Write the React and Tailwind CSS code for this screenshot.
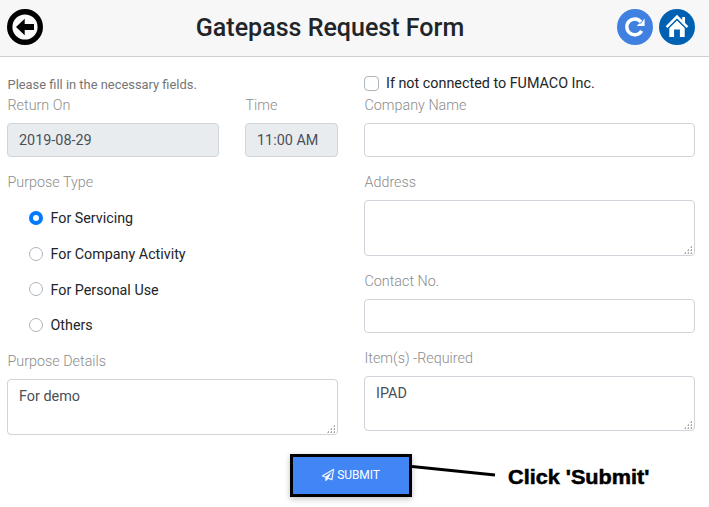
import React from 'react';

function Label({ children, className = '' }) {
  return (
    <label className={`block h-[18px] whitespace-nowrap pt-px pl-[0.5px] text-[14.35px] leading-[18px] font-light text-[#8c8c8c] ${className}`}>
      {children}
    </label>
  );
}

function Field({ value = '', disabled = false, className = 'w-full' }) {
  return (
    <input
      readOnly
      value={value}
      className={`block h-[34px] rounded-[4px] border border-[#ced4da] px-[11px] text-[14.4px] text-[#495057] outline-none ${disabled ? 'bg-[#e9ecef]' : 'bg-white'} ${className}`}
    />
  );
}

const gripDots = [[7, 0], [4, 3], [7, 3], [1, 6], [4, 6], [7, 6]];

function Area({ value = '', className = 'h-[56px]' }) {
  return (
    <div className={`relative w-full ${className}`}>
      <textarea
        readOnly
        value={value}
        className="block h-full w-full resize-none overflow-hidden rounded-[4px] border border-[#ced4da] bg-white px-[11px] py-[6px] text-[14.4px] leading-[22px] text-[#495057] outline-none"
      />
      <svg className="absolute right-[2px] bottom-[2px] h-[8px] w-[9px]" viewBox="0 0 9 8" shapeRendering="crispEdges">
        {gripDots.map(([x, y]) => (
          <g key={`${x}-${y}`}>
            <rect x={x} y={y} width="1" height="2" fill="#adadad" />
            <rect x={x - 1} y={y + 1} width="1" height="1" fill="#cccccc" />
          </g>
        ))}
      </svg>
    </div>
  );
}

function Radio({ label, checked = false }) {
  return (
    <div className="flex h-[35.7px] items-center">
      <span
        className={`h-[14px] w-[14px] rounded-full ${checked ? 'border-[4px] border-[#007bff] bg-white' : 'border border-[#adb5bd] bg-white'}`}
      />
      <span className="ml-[7.5px] whitespace-nowrap pt-[1px] text-[14.3px] leading-[20px] text-[#212529]">{label}</span>
    </div>
  );
}

function Header() {
  return (
    <header className="flex h-[57px] items-start justify-between border-b border-[#d0d0d0] bg-[#f7f7f7] pt-[9px] pr-[14px] pl-[7px]">
      <svg className="h-[36px] w-[36px]" viewBox="0 0 36 36">
        <circle cx="18" cy="18" r="15.3" fill="#fafafa" stroke="#000" strokeWidth="5.4" />
        <path d="M9 18 L17.7 9.7 V15 H27 V21 H17.7 V26.3 Z" fill="#000" />
      </svg>
      <h1 className="text-[25.05px] leading-[37px] font-medium whitespace-nowrap text-[#212529]">Gatepass Request Form</h1>
      <div className="flex gap-[6px]">
        <svg className="h-[36px] w-[36px]" viewBox="0 0 36 36">
          <circle cx="18" cy="18" r="18" fill="#4080e0" />
          <path d="M24 13 A7.900 7.900 0 1 0 24.600 21.800" fill="none" stroke="#fff" strokeWidth="3.4" />
          <path d="M27.600 9.500 V17 H19.600 L22.200 14.600 H24 Z" fill="#fff" />
        </svg>
        <svg className="h-[36px] w-[36px]" viewBox="0 0 36 36">
          <circle cx="18" cy="18" r="18" fill="#0061b3" />
          <path d="M7.6 18.2 L18 7.6 L28.400 18.2" fill="none" stroke="#fff" strokeWidth="2.500" />
          <path d="M23.200 8 H26 V14.500 L23.200 11.800 Z" fill="#fff" />
          <path d="M10.300 18.900 L18 11.500 L25.700 18.900 V28 H20.900 V20.500 H15.100 V28 H10.300 Z" fill="#fff" />
          <path d="M9 19.300 L18 10.200 L27 19.300" fill="none" stroke="#0061b3" strokeWidth="0.8" />
        </svg>
      </div>
    </header>
  );
}

export default function App() {
  return (
    <div className="relative h-[507px] w-[709px] overflow-hidden bg-white font-[Roboto,sans-serif]">
      <Header />
      <main className="flex gap-[26px] pt-[18px] pl-[7px]">
        <section className="w-[331px]">
          <p className="h-[21px] pl-[0.5px] text-[12.9px] leading-[20px] text-[#757575]">Please fill in the necessary fields.</p>
          <div className="flex gap-[26px]">
            <div className="w-[212px]">
              <Label>Return On</Label>
              <Field value="2019-08-29" disabled className="mt-[9px] w-full" />
            </div>
            <div className="w-[93px]">
              <Label>Time</Label>
              <Field value="11:00 AM" disabled className="mt-[9px] w-full" />
            </div>
          </div>
          <Label className="mt-[16px]">Purpose Type</Label>
          <div className="mt-[9px] mb-[9px] h-[143px] pl-[22px]">
            <Radio label="For Servicing" checked />
            <Radio label="For Company Activity" />
            <Radio label="For Personal Use" />
            <Radio label="Others" />
          </div>
          <Label>Purpose Details</Label>
          <Area value="For demo" className="mt-[9px] h-[56px]" />
        </section>
        <section className="w-[331px]">
          <div className="flex h-[21px] items-start">
            <span className="mt-px h-[15px] w-[15px] rounded-[4px] border border-[#adb5bd] bg-white" />
            <span className="ml-[7px] text-[14.35px] leading-[18px] whitespace-nowrap text-[#212529]">If not connected to FUMACO Inc.</span>
          </div>
          <Label>Company Name</Label>
          <Field className="mt-[9px] w-full" />
          <Label className="mt-[16px]">Address</Label>
          <Area className="mt-[9px] h-[56px]" />
          <Label className="mt-[16px]">Contact No.</Label>
          <Field className="mt-[9px] w-full" />
          <Label className="mt-[16px]">Item(s) -Required</Label>
          <Area value="IPAD" className="mt-[9px] h-[55px]" />
        </section>
      </main>
      <div className="mt-[19px] flex items-center pl-[290px]">
        <button className="flex h-[43px] w-[122px] items-center justify-center border-[3px] border-black bg-[#4285f4] pb-[2px] text-[12px] leading-[16px] tracking-[-0.1px] text-white shadow-[0_2px_6px_rgba(0,0,0,0.25)]">
          <svg className="mr-[3px] h-[12px] w-[12px] overflow-visible" viewBox="0 0 1792 1792" fill="#fff" stroke="#fff" strokeWidth="40">
            <path d="M1764 11q33 24 27 64l-256 1536q-5 29-32 45-14 8-31 8-11 0-24-5l-527-215-298 327q-18 21-47 21-14 0-23-4-19-7-30-23.500t-11-36.500v-452l-472-193q-37-14-40-55-3-39 32-59l1664-960q35-21 68 2zm-342 1499l221-1323-1434 827 336 137 863-639-478 797z" />
          </svg>
          <span>SUBMIT</span>
        </button>
        <svg className="h-[43px] w-[84px]" viewBox="0 0 84 43">
          <path d="M0 12.500 L83 21" stroke="#000" strokeWidth="3" />
        </svg>
        <span className="mt-[3px] ml-[11.5px] origin-left scale-x-[1.1] font-['Liberation_Sans',sans-serif] text-[19.7px] leading-[24px] font-bold whitespace-nowrap text-black [-webkit-text-stroke:0.5px_black]">Click 'Submit'</span>
      </div>
    </div>
  );
}
